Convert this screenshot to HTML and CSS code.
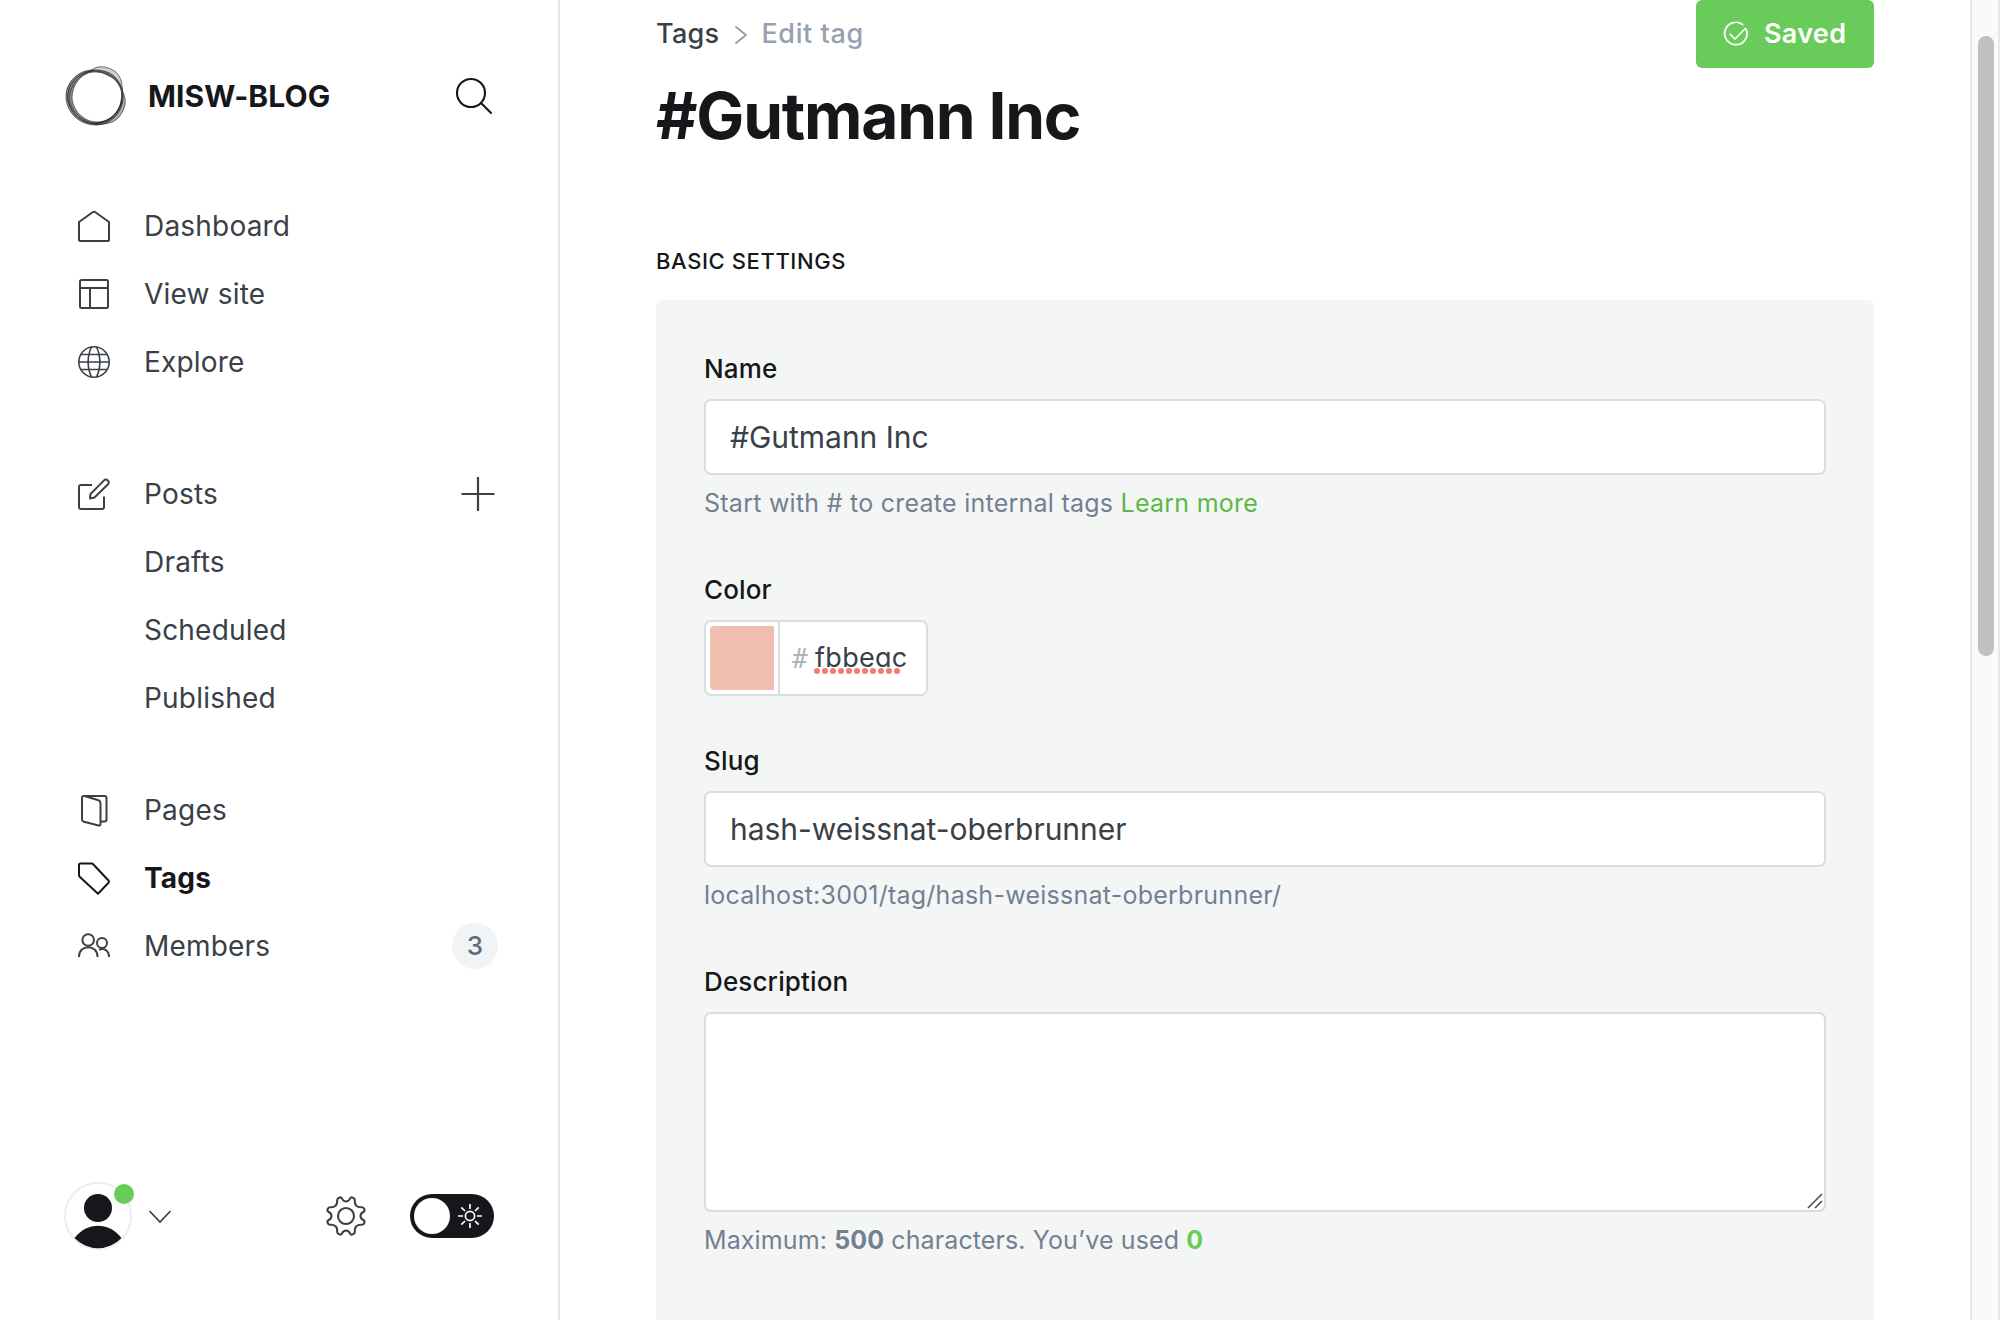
FILE: index.html
```html
<!DOCTYPE html>
<html lang="en">
<head>
<meta charset="utf-8">
<title>Edit tag</title>
<link rel="stylesheet" href="styles.css">
</head>
<body>
<div class="app">
  <aside class="sidebar">
    <header class="brand">
      <svg class="brand-logo" width="62" height="62" viewBox="0 0 62 62" fill="none" stroke="#15171a">
        <path d="M27 5C15 5 1 16 1 31C1 47 14 60 31 60C44 60 58 49 58 32C58 20 51 10 42 7C37 5 32 5 27 5ZM28 7C16 8 7 20 7 33C8 46 19 57 32 57C45 57 56 46 57 32C57 22 51 13 42 10C37 7 32 7 28 7Z" fill="#15171a" fill-opacity=".5" fill-rule="evenodd" stroke-width=".6"/>
        <path d="M26 5.500C33 -1 44 2 50 6.500C56 11 57 18 57.500 26C54 16 47 11 42 9C36 6 31 6 26 5.500Z" fill="#15171a" fill-opacity=".2" stroke-width=".6"/>
        <path d="M57.500 26C62 35 61 43 54 52C49 58 40 60 29 59C42 57 49 53 53 45C57 38 56 31 57.500 26Z" fill="#15171a" fill-opacity=".35" stroke-width=".6"/>
        <path d="M28 6C13 8 5 22 4 33C5 45 18 59 32 58C46 57 54 46 57 36" stroke-width=".6"/>
        <path d="M26 6C12 8 1 21 3 35C6 49 16 59 33 59" stroke-width=".8"/>
      </svg>
      <span class="brand-name">MISW-BLOG</span>
      <svg class="search" width="40" height="40" viewBox="0 0 40 40" fill="none" stroke="#15171a" stroke-width="2.1" stroke-linecap="round"><circle cx="17" cy="17" r="14"/><path d="M27 27l10 10"/></svg>
    </header>

    <nav class="nav">
      <ul class="nav-group">
        <li class="nav-item"><svg class="icon" width="36" height="36" viewBox="0 0 36 36"><path d="M3 14 16.6 4.200Q18 3.200 19.400 4.200L33 14V32Q33 33 32 33H4Q3 33 3 32Z"/></svg>Dashboard</li>
        <li class="nav-item"><svg class="icon" width="36" height="36" viewBox="0 0 36 36"><rect x="4" y="4" width="28" height="28" rx="1.500"/><path d="M4 12H32M14 12V32"/></svg>View site</li>
        <li class="nav-item"><svg class="icon icon-thin" width="36" height="36" viewBox="0 0 36 36"><circle cx="18" cy="18" r="15.200"/><path d="M15.500 3C11 12 11 24 15.500 33M20.500 3C25 12 25 24 20.500 33M4.500 10.500H31.500M3 18H33M4.500 25.500H31.500"/></svg>Explore</li>
      </ul>
      <ul class="nav-group nav-posts">
        <li class="nav-item"><svg class="icon" width="36" height="36" viewBox="0 0 36 36"><path d="M16 9H5Q3 9 3 11V31Q3 33 5 33H26Q28 33 28 31V20.500"/><path d="M14 22.500 14.500 18 28 4.400C30.500 2 34.500 5.600 32 8.200L18.500 21.500Z"/></svg>Posts
          <svg class="plus" width="36" height="36" viewBox="0 0 36 36"><path d="M18 1V35M1.500 18H34.500"/></svg></li>
        <li class="nav-item nav-sub">Drafts</li>
        <li class="nav-item nav-sub">Scheduled</li>
        <li class="nav-item nav-sub">Published</li>
      </ul>
      <ul class="nav-group">
        <li class="nav-item"><svg class="icon" width="36" height="36" viewBox="0 0 36 36"><path d="M24 29.500H28.500Q30.500 29.500 30.500 27.500V6Q30.500 4 28.500 4H7.500"/><path d="M6 6Q6 3.500 8.500 4L22.500 8.200Q24.500 9 24.500 11V32Q24.500 34 22.500 33.500L8 29.700Q6 29 6 27.500Z"/></svg>Pages</li>
        <li class="nav-item is-active"><svg class="icon" width="36" height="36" viewBox="0 0 36 36"><path d="M3 5Q3 3.500 4.500 3.500H15.500Q16.500 3.500 17.200 4.200L32.500 20.500Q33.500 21.700 32.500 22.700L22 33.800L3.900 17Q3 16 3 14.900Z"/></svg>Tags</li>
        <li class="nav-item"><svg class="icon" width="36" height="36" viewBox="0 0 36 36"><circle cx="12.200" cy="12" r="5.800"/><path d="M3 29V28.500C3 16 21.500 16 21.500 28.500V29"/><circle cx="26" cy="15" r="5"/><path d="M23 21.800C28 19.500 33 22.500 33 29"/></svg>Members
          <span class="badge">3</span></li>
      </ul>
    </nav>

    <footer class="account">
      <div class="avatar">
        <svg width="68" height="68" viewBox="0 0 68 68"><circle cx="34" cy="34" r="33" fill="#fff" stroke="#ebeef0" stroke-width="2"/><circle cx="34" cy="26" r="14" fill="#15171a"/><path d="M10.500 56C23 39.500 45 39.500 57.500 56A32 32 0 0 1 10.500 56Z" fill="#15171a"/></svg>
        <span class="status"></span>
      </div>
      <svg class="chevron" width="26" height="16" viewBox="0 0 26 16"><path d="M3 2.500 13 13 23 2.500"/></svg>
      <svg class="gear" width="44" height="44" viewBox="-22 -22 44 44"><circle r="8"/><path d="M0-14.500C2.200-14.500 3.400-16 4.200-17.600C5-19.500 8.800-18.200 8.800-16C8.800-14.500 8.400-12.500 10.300-10.300C12.500-8.400 14.500-8.800 16-8.800C18.200-8.800 19.500-5 17.600-4.200C16-3.400 14.500-2.200 14.500 0C14.500 2.200 16 3.400 17.600 4.200C19.500 5 18.200 8.800 16 8.800C14.500 8.800 12.500 8.400 10.300 10.300C8.400 12.500 8.800 14.500 8.800 16C8.800 18.200 5 19.500 4.200 17.600C3.400 16 2.200 14.500 0 14.500C-2.200 14.500-3.400 16-4.200 17.600C-5 19.500-8.800 18.200-8.800 16C-8.800 14.500-8.400 12.500-10.300 10.300C-12.500 8.400-14.500 8.800-16 8.800C-18.200 8.800-19.500 5-17.600 4.200C-16 3.400-14.500 2.200-14.500 0C-14.500-2.200-16-3.400-17.600-4.200C-19.500-5-18.200-8.800-16-8.800C-14.500-8.800-12.500-8.400-10.300-10.300C-8.400-12.500-8.800-14.500-8.800-16C-8.800-18.200-5-19.500-4.200-17.600C-3.400-16-2.200-14.500 0-14.500Z"/></svg>
      <div class="toggle">
        <span class="knob"></span>
        <svg width="24" height="24" viewBox="-12 -12 24 24" fill="none" stroke="#fff" stroke-width="1.700"><circle r="4.600"/><path d="M0-12V-7M0 12V7M-12 0H-7M12 0H7M-8.700-8.700-5-5M8.700 8.700 5 5M8.700-8.700 5-5M-8.700 8.700-5 5"/></svg>
      </div>
    </footer>
  </aside>

  <main class="main">
    <div class="top">
      <div class="crumbs"><span class="crumb">Tags</span><svg width="14" height="20" viewBox="0 0 14 20" fill="none" stroke="#8e9cac" stroke-width="1.800" stroke-linecap="round" stroke-linejoin="round"><path d="M2 2 12 10 2 18"/></svg><span class="crumb-current">Edit tag</span></div>
      <button class="save"><svg width="26" height="26" viewBox="0 0 26 26" fill="none" stroke="#fff" stroke-width="1.700" stroke-linecap="round" stroke-linejoin="round"><path d="M19.500 3.500A11.200 11.200 0 1 0 23.300 8.500"/><path d="M7.300 13.300 12 18 22.300 7.500"/></svg>Saved</button>
    </div>
    <h1 class="title">#Gutmann Inc</h1>
    <h2 class="section">Basic settings</h2>
    <form class="panel">
      <div class="field">
        <div class="label">Name</div>
        <div class="input">#Gutmann Inc</div>
        <p class="hint">Start with # to create internal tags <a class="link">Learn more</a></p>
      </div>
      <div class="field">
        <div class="label">Color</div>
        <div class="color">
          <span class="swatch-cell"><span class="swatch"></span></span>
          <span class="hash">#</span>
          <span class="hex">fbbeac<svg class="spelling" width="88" height="6" viewBox="0 0 88 6"><path d="M3 3H84"/></svg></span>
        </div>
      </div>
      <div class="field">
        <div class="label">Slug</div>
        <div class="input">hash-weissnat-oberbrunner</div>
        <p class="hint">localhost:3001/tag/hash-weissnat-oberbrunner/</p>
      </div>
      <div class="field">
        <div class="label">Description</div>
        <div class="input area"><svg width="16" height="16" viewBox="0 0 16 16"><path d="M1 15 15 1M8 15 15 8"/></svg></div>
        <p class="hint count">Maximum: <b>500</b> characters. You’ve used <b class="used">0</b></p>
      </div>
    </form>
  </main>

  <div class="scrollbar"><div class="thumb"></div></div>
</div>
</body>
</html>
```
FILE: styles.css
```css
* { box-sizing: border-box; margin: 0; padding: 0; }
body {
  height: 1320px;
  overflow: hidden;
  background: #fff;
  color: #15171a;
  font-family: Inter, "Liberation Sans", sans-serif;
}
.app { display: flex; height: 1320px; overflow: hidden; }
svg { display: block; flex: none; }

/* Sidebar */
.sidebar {
  display: flex;
  flex-direction: column;
  flex: none;
  width: 560px;
  height: 1320px;
  border-right: 2px solid #e8e8e8;
}
.brand { display: flex; align-items: center; height: 62px; margin: 65px 64px 64px 65px; }
.brand-name { margin-left: 21px; font-size: 30px; font-weight: 700; line-height: 40px; letter-spacing: 0.080px; }
.search { margin-left: auto; }
.nav { padding: 0 60px 0 76px; }
.nav-group { list-style: none; margin-bottom: 64px; }
.nav-posts { margin-bottom: 44px; }
.nav-item {
  display: flex;
  align-items: center;
  height: 68px;
  padding-top: 1px;
  color: #394047;
  font-size: 28px;
  line-height: 68px;
  letter-spacing: 0.2px;
}
.icon { margin: 0 32px 0 0; fill: none; stroke: #394047; stroke-width: 2; stroke-linejoin: round; }
.icon-thin { stroke-width: 1.600; }
.plus { margin: 1px 2px 0 auto; fill: none; stroke: #394047; stroke-width: 2.200; }
.nav-sub { padding-left: 68px; }
.is-active { color: #15171a; font-weight: 700; }
.is-active .icon { stroke: #15171a; }
.badge {
  width: 46px;
  height: 46px;
  margin: 1px 0 0 auto;
  border-radius: 23px;
  background: #f1f3f4;
  color: #5d6b7b;
  font-size: 26px;
  font-weight: 500;
  line-height: 46px;
  text-align: center;
}
.account { display: flex; align-items: center; height: 68px; margin: auto 64px 70px; }
.avatar { position: relative; }
.status { position: absolute; top: 2px; left: 50px; width: 20px; height: 20px; border-radius: 50%; background: #69cb5a; }
.chevron { margin: 1px 0 0 15px; fill: none; stroke: #394047; stroke-width: 1.700; stroke-linecap: round; }
.gear { margin-left: 151px; fill: none; stroke: #394047; stroke-width: 2.100; }
.toggle {
  display: flex;
  align-items: center;
  width: 84px;
  height: 44px;
  margin-left: 42px;
  padding: 0 12px 0 4px;
  justify-content: space-between;
  border-radius: 22px;
  background: #15171a;
}
.knob { width: 36px; height: 36px; border-radius: 50%; background: #fff; }

/* Tag editor */
.main { flex: 1; padding: 0 96px; }
.top { display: flex; justify-content: space-between; height: 68px; }
.crumbs { display: flex; align-items: center; height: 67px; font-size: 27px; font-weight: 500; letter-spacing: 0.3px; }
.crumbs svg { margin: 3px 13px 0 15px; }
.crumb { color: #394047; }
.crumb-current { color: #95a1af; letter-spacing: 0.6px; }
.save {
  display: flex;
  align-items: center;
  width: 178px;
  height: 68px;
  padding: 0 0 0 27px;
  gap: 15px;
  border: 0;
  border-radius: 6px;
  background: #69cb5a;
  color: #fff;
  font: 600 27px/66px Inter, sans-serif;
  letter-spacing: 0.3px;
}
.title { margin-top: 8px; font-size: 64px; font-weight: 700; line-height: 80px; letter-spacing: -1.200px; }
.section {
  margin: 90px 0 24px;
  font-size: 22px;
  font-weight: 500;
  line-height: 30px;
  letter-spacing: 0.600px;
  text-transform: uppercase;
}
.panel { height: 1100px; padding: 51px 48px 0; border-radius: 6px; background: #f4f6f6; }
.field { margin-bottom: 47px; }
.label { margin-bottom: 12px; font-size: 26px; font-weight: 500; line-height: 36px; letter-spacing: 0.140px; }
.input {
  height: 76px;
  padding: 0 24px;
  border: 2px solid #dadddd;
  border-radius: 7px;
  background: #fff;
  color: #394047;
  font-size: 30px;
  line-height: 72px;
  letter-spacing: -0.030px;
}
.area { display: flex; align-items: flex-end; justify-content: flex-end; height: 200px; padding: 0 1px 1px 0; }
.area path { fill: none; stroke: #555; stroke-width: 1.700; }
.hint { padding: 10px 0 4px; color: #738091; font-size: 25px; line-height: 36px; letter-spacing: 0.250px; }
.count { letter-spacing: 0.110px; }
.link { color: #58b946; }
.used { color: #69cb5a; }
.color { display: flex; width: 224px; height: 76px; border: 2px solid #dadddd; border-radius: 7px; background: #fff; }
.swatch-cell { width: 74px; padding: 4px; border-right: 2px solid #dadddd; }
.swatch { display: block; width: 64px; height: 64px; border-radius: 4px 0 0 4px; background: #f1bfaf; }
.hash { width: 22px; margin-left: 12px; color: #abb4be; font: 400 26px/74px "DejaVu Sans Mono", monospace; }
.hex {
  position: relative;
  height: 72px;
  margin-left: 1px;
  color: #394047;
  font-size: 27px;
  line-height: 71px;
  font-feature-settings: "cv11";
  letter-spacing: 0.300px;
}
.spelling { position: absolute; top: 46px; left: -1px; }
.spelling path { fill: none; stroke: #f27c70; stroke-width: 6; stroke-linecap: round; stroke-dasharray: 0 8; }

/* Page scrollbar */
.scrollbar { flex: none; width: 30px; padding: 36px 4px 0 6px; border: solid #e8e8e8; border-width: 0 2px; background: #fafafa; }
.thumb { width: 16px; height: 620px; border-radius: 8px; background: #c1c1c1; }
```
